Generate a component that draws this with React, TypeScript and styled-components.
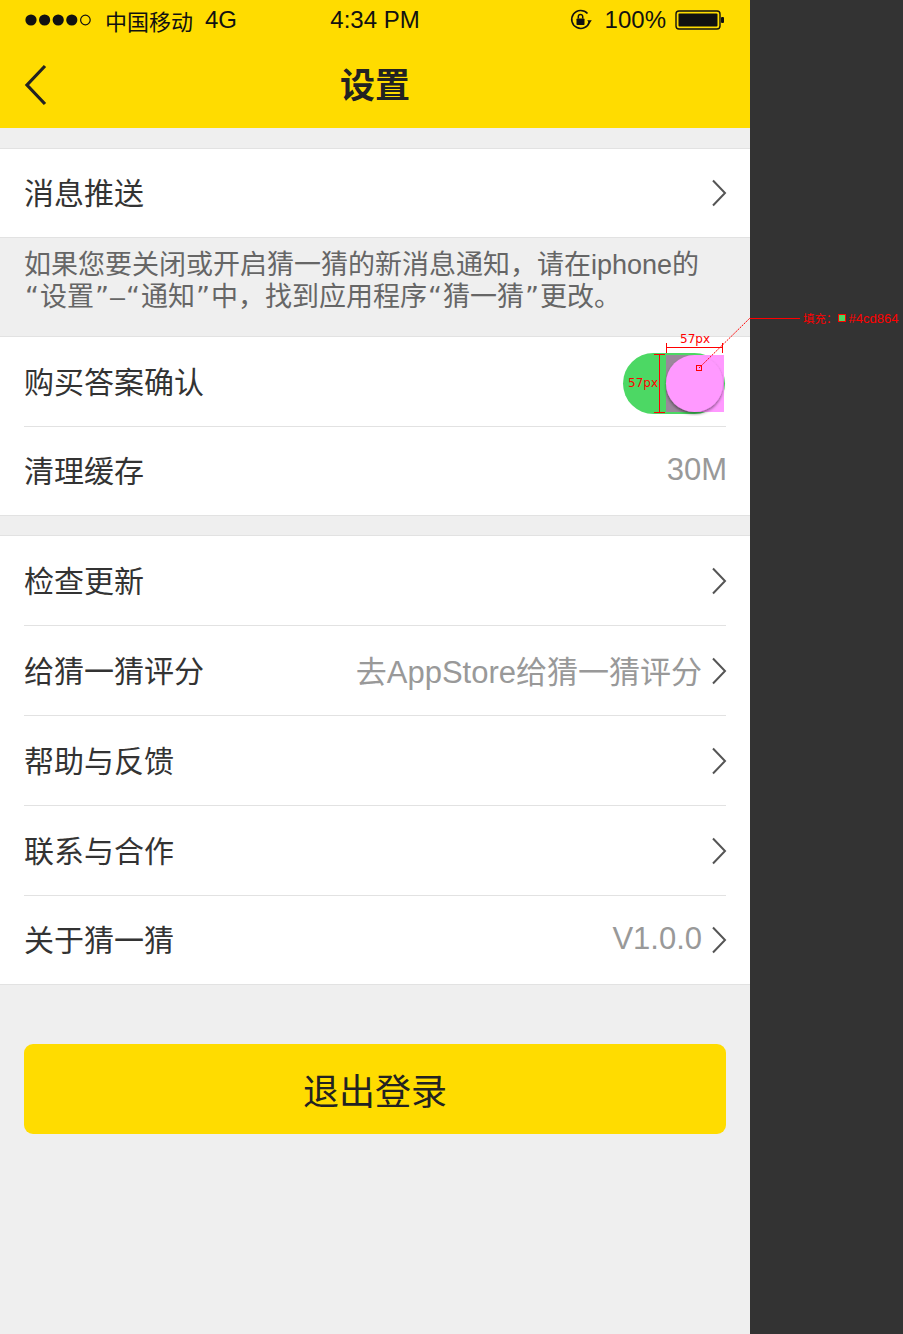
import styled, { createGlobalStyle } from "styled-components";

const GlobalStyle = createGlobalStyle`
  html, body {
    margin: 0;
    padding: 0;
    background: #333333;
  }
  body {
    font-family: "Liberation Sans", "Noto Sans CJK SC", sans-serif;
  }
`;

const YELLOW = "#ffdc00";
const RED = "#ff0000";

const Chevron = () => (
  <svg width="16" height="28" viewBox="0 0 16 28">
    <polyline points="2,1.5 14,14 2,26.5" fill="none" stroke="#555" strokeWidth="2" />
  </svg>
);

const SignalDots = () => (
  <svg width="68" height="14" viewBox="0 0 68 14">
    {[0, 1, 2, 3].map((i) => (
      <circle key={i} cx={6 + i * 13.6} cy="7" r="5.6" fill="#111" />
    ))}
    <circle cx={6 + 4 * 13.6} cy="7" r="4.8" fill="none" stroke="#111" strokeWidth="1.2" />
  </svg>
);

const RotationLock = () => (
  <svg width="24" height="24" viewBox="0 0 24 24">
    <path d="M20.5 13.5 A9 9 0 1 1 18.5 5.5" fill="none" stroke="#111" strokeWidth="1.6" />
    <polygon points="18.2,12.2 22.8,12.2 20.5,15.6" fill="#111" />
    <rect x="7.5" y="10.5" width="8" height="6.5" rx="0.8" fill="#111" />
    <path d="M9.3 10.5 V8.6 a2.2 2.2 0 0 1 4.4 0 V10.5" fill="none" stroke="#111" strokeWidth="1.5" />
  </svg>
);

const Battery = () => (
  <svg width="50" height="20" viewBox="0 0 50 20">
    <rect x="1" y="1" width="44" height="18" rx="3" fill="none" stroke="#111" strokeWidth="1.4" />
    <rect x="3.5" y="3.5" width="39" height="13" rx="1" fill="#111" />
    <rect x="46" y="7" width="3" height="6" rx="1" fill="#111" />
  </svg>
);

const BackArrow = () => (
  <svg width="24" height="42" viewBox="0 0 24 42">
    <polyline points="21,2 3,21 21,40" fill="none" stroke="#222" strokeWidth="3.2" />
  </svg>
);

const SwitchDrawing = () => (
  <svg width="104" height="64" viewBox="0 0 104 64">
    <defs>
      <filter id="knobShadow" x="-30%" y="-30%" width="160%" height="160%">
        <feDropShadow dx="0" dy="2" stdDeviation="1.6" floodColor="#000" floodOpacity="0.45" />
      </filter>
    </defs>
    <rect x="1" y="1" width="102" height="61" rx="30.5" fill="#4cd864" />
    <rect x="44" y="3" width="58" height="57" fill="#ff99ff" />
    <path d="M44 3 H72 V60 H44 Z" fill="#9b879b" />
    <circle cx="72.5" cy="31.5" r="28.5" fill="#ff99ff" filter="url(#knobShadow)" />
  </svg>
);

export default function App() {
  return (
    <Page>
      <GlobalStyle />
      <Phone>
        <Header>
          <StatusBar>
            <StatusLeft>
              <SignalDots />
              <Carrier>中国移动</Carrier>
              <span>4G</span>
            </StatusLeft>
            <StatusTime>4:34 PM</StatusTime>
            <StatusRight>
              <RotationLock />
              <Percent>100%</Percent>
              <Battery />
            </StatusRight>
          </StatusBar>
          <NavBar>
            <BackButton>
              <BackArrow />
            </BackButton>
            <Title>设置</Title>
          </NavBar>
        </Header>

        <Section>
          <Row>
            <Label>消息推送</Label>
            <Right>
              <Chevron />
            </Right>
          </Row>
        </Section>

        <Note>
          <NoteLine>如果您要关闭或开启猜一猜的新消息通知，请在iphone的</NoteLine>
          <NoteLine>
            <Quote>“</Quote>设置<Quote>”</Quote>–<Quote>“</Quote>通知<Quote>”</Quote>中，找到应用程序
            <Quote>“</Quote>猜一猜<Quote>”</Quote>更改。
          </NoteLine>
        </Note>

        <Section>
          <Row $divider>
            <Label>购买答案确认</Label>
            <SwitchBox>
              <SwitchDrawing />
            </SwitchBox>
          </Row>
          <Row>
            <Label>清理缓存</Label>
            <Value>30M</Value>
          </Row>
        </Section>

        <Gap />

        <Section>
          <Row $divider>
            <Label>检查更新</Label>
            <Right>
              <Chevron />
            </Right>
          </Row>
          <Row $divider>
            <Label>给猜一猜评分</Label>
            <Right>
              <Value>去AppStore给猜一猜评分</Value>
              <Chevron />
            </Right>
          </Row>
          <Row $divider>
            <Label>帮助与反馈</Label>
            <Right>
              <Chevron />
            </Right>
          </Row>
          <Row $divider>
            <Label>联系与合作</Label>
            <Right>
              <Chevron />
            </Right>
          </Row>
          <Row>
            <Label>关于猜一猜</Label>
            <Right>
              <Value>V1.0.0</Value>
              <Chevron />
            </Right>
          </Row>
        </Section>

        <LogoutButton>退出登录</LogoutButton>
      </Phone>
      <SidePanel />

      <Annotation>
        <svg width="903" height="440" viewBox="0 0 903 440">
          <line x1="699" y1="368" x2="750" y2="318" stroke={RED} strokeWidth="1" strokeDasharray="2 1" />
          <line x1="750" y1="318.5" x2="800" y2="318.5" stroke={RED} strokeWidth="1" />
          <rect x="696.5" y="365.5" width="5" height="5" fill="none" stroke={RED} strokeWidth="1" />
          <line x1="666" y1="347.5" x2="723" y2="347.5" stroke={RED} strokeWidth="1" />
          <line x1="666.5" y1="343" x2="666.5" y2="353" stroke={RED} strokeWidth="1" />
          <line x1="722.5" y1="343" x2="722.5" y2="353" stroke={RED} strokeWidth="1" />
          <line x1="659.5" y1="354" x2="659.5" y2="413" stroke={RED} strokeWidth="1" />
          <line x1="654" y1="354.5" x2="665" y2="354.5" stroke={RED} strokeWidth="1" />
          <line x1="654" y1="412.5" x2="665" y2="412.5" stroke={RED} strokeWidth="1" />
        </svg>
        <DimLabel $x={680} $y={332}>57px</DimLabel>
        <DimLabel $x={628} $y={376}>57px</DimLabel>
        <FillLabel>
          <FillTitle>填充：</FillTitle>
          <Swatch />
          <span>#4cd864</span>
        </FillLabel>
      </Annotation>
    </Page>
  );
}

const Page = styled.div`
  position: relative;
  display: flex;
  width: 903px;
  min-height: 1334px;
`;

const Phone = styled.div`
  width: 750px;
  min-height: 1334px;
  background: #efefef;
  display: flex;
  flex-direction: column;
`;

const SidePanel = styled.div`
  flex: 1;
  background: #333333;
`;

const Header = styled.div`
  background: ${YELLOW};
  margin-bottom: 20px;
`;

const StatusBar = styled.div`
  height: 40px;
  display: grid;
  grid-template-columns: 1fr auto 1fr;
  align-items: center;
  padding: 0 25px;
  font-size: 24px;
  color: #111;
`;

const StatusLeft = styled.div`
  display: flex;
  align-items: center;
  gap: 12px;
`;

const Carrier = styled.span`
  font-family: "Noto Sans CJK SC", sans-serif;
  font-size: 22px;
`;

const StatusTime = styled.div`
  text-align: center;
`;

const StatusRight = styled.div`
  display: flex;
  align-items: center;
  justify-content: flex-end;
  gap: 9px;
`;

const Percent = styled.span`
  margin-left: 3px;
`;

const NavBar = styled.div`
  height: 88px;
  display: flex;
  align-items: center;
  justify-content: center;
  position: relative;
`;

const BackButton = styled.div`
  position: absolute;
  left: 24px;
  top: 24px;
  display: flex;
`;

const Title = styled.h1`
  margin: 0 0 3px;
  font-family: "Noto Sans CJK SC", sans-serif;
  font-size: 35px;
  font-weight: 700;
  color: #222;
`;

const Section = styled.div`
  background: #fff;
  border-top: 1px solid #e2e2e2;
  border-bottom: 1px solid #e2e2e2;
`;

const Row = styled.div<{ $divider?: boolean }>`
  margin: 0 24px;
  display: flex;
  align-items: center;
  justify-content: space-between;
  border-bottom: ${(p) => (p.$divider ? "1px solid #e2e2e2" : "none")};
  height: ${(p) => (p.$divider ? "89px" : "88px")};
`;

const Label = styled.span`
  font-family: "Noto Sans CJK SC", sans-serif;
  font-size: 30px;
  color: #333;
  margin-bottom: 4px;
`;

const Right = styled.div`
  display: flex;
  align-items: center;
  gap: 10px;
  margin-right: -1px;
`;

const Value = styled.span`
  font-family: "Liberation Sans", "Noto Sans CJK SC", sans-serif;
  font-size: 31px;
  color: #999;
  margin-right: -1px;
  margin-bottom: 2px;
`;

const SwitchBox = styled.div`
  display: flex;
  margin-top: 5px;
`;

const Note = styled.div`
  height: 98px;
  box-sizing: border-box;
  padding: 11px 24px 0;
  font-family: "Liberation Sans", "Noto Sans CJK SC", sans-serif;
  font-size: 27px;
  color: #666;
`;

const NoteLine = styled.div`
  height: 32px;
  line-height: 32px;
  white-space: nowrap;
`;

const Quote = styled.span`
  font-family: "DejaVu Sans", sans-serif;
  line-height: 0;
  margin: 0 1px;
`;

const Gap = styled.div`
  height: 19px;
`;

const LogoutButton = styled.button`
  margin: 59px 24px 0;
  height: 90px;
  border: none;
  border-radius: 9px;
  background: ${YELLOW};
  font-family: "Noto Sans CJK SC", sans-serif;
  font-size: 36px;
  color: #222;
  padding: 0;
`;

const Annotation = styled.div`
  position: absolute;
  left: 0;
  top: 0;
  width: 903px;
  height: 440px;
  pointer-events: none;

  svg {
    position: absolute;
    left: 0;
    top: 0;
  }
`;

const DimLabel = styled.span<{ $x: number; $y: number }>`
  position: absolute;
  left: ${(p) => p.$x}px;
  top: ${(p) => p.$y}px;
  font-family: "DejaVu Sans", sans-serif;
  font-size: 12px;
  color: ${RED};
`;

const FillLabel = styled.span`
  position: absolute;
  left: 803px;
  top: 310px;
  display: flex;
  align-items: center;
  font-family: "Liberation Sans", sans-serif;
  font-size: 13px;
  color: ${RED};
  white-space: nowrap;
`;

const FillTitle = styled.span`
  font-family: "Noto Sans CJK SC", sans-serif;
  font-size: 11.5px;
`;

const Swatch = styled.span`
  display: inline-block;
  width: 6px;
  height: 6px;
  background: #4cd864;
  border: 1px solid ${RED};
  margin: 0 3px 0 0;
`;
